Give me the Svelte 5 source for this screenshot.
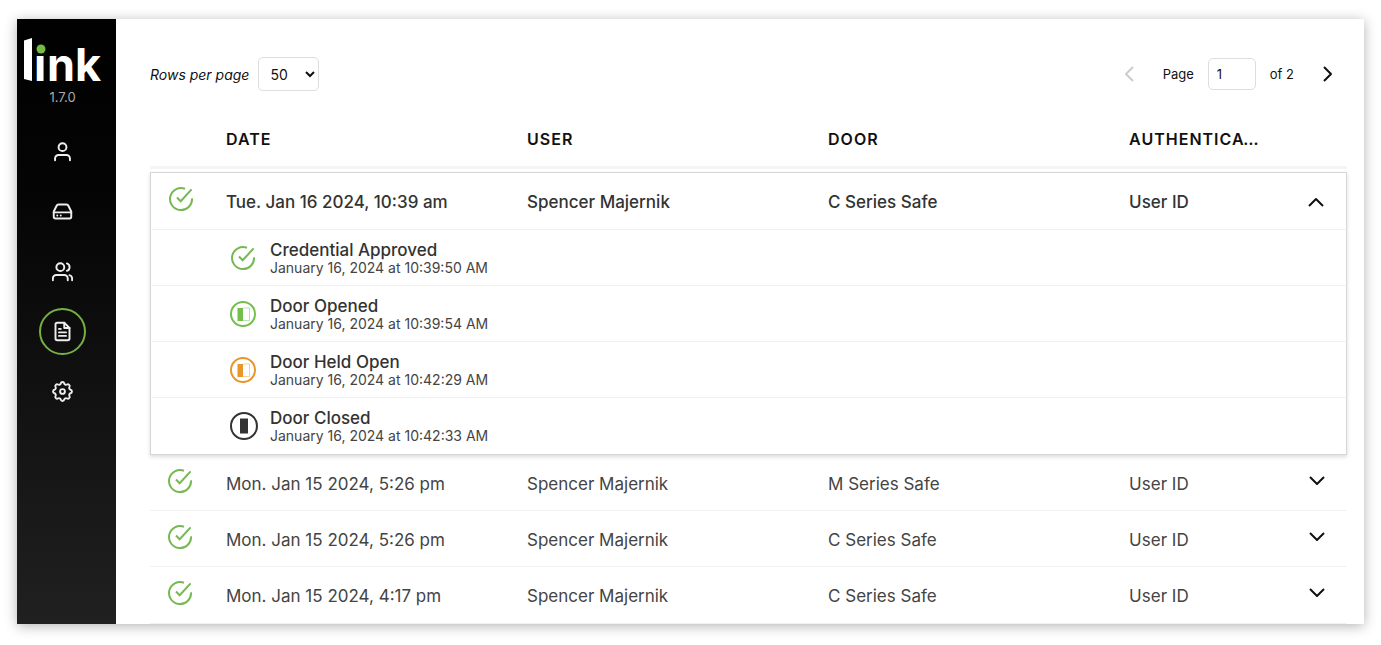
<script>
  let rowsPerPage = $state('50');
  let page = $state('1');

  const nav = [
    { label: 'Profile', icon: 'user' },
    { label: 'Devices', icon: 'drive' },
    { label: 'Users', icon: 'users' },
    { label: 'Reports', icon: 'file', active: true },
    { label: 'Settings', icon: 'gear' }
  ];

  const columns = ['Date', 'User', 'Door', 'Authentication'];

  let entries = $state([
    {
      date: 'Tue. Jan 16 2024, 10:39 am',
      user: 'Spencer Majernik',
      door: 'C Series Safe',
      auth: 'User ID',
      open: true,
      events: [
        { kind: 'approved', title: 'Credential Approved', time: 'January 16, 2024 at 10:39:50 AM' },
        { kind: 'opened', title: 'Door Opened', time: 'January 16, 2024 at 10:39:54 AM' },
        { kind: 'held', title: 'Door Held Open', time: 'January 16, 2024 at 10:42:29 AM' },
        { kind: 'closed', title: 'Door Closed', time: 'January 16, 2024 at 10:42:33 AM' }
      ]
    },
    { date: 'Mon. Jan 15 2024, 5:26 pm', user: 'Spencer Majernik', door: 'M Series Safe', auth: 'User ID', open: false, events: [] },
    { date: 'Mon. Jan 15 2024, 5:26 pm', user: 'Spencer Majernik', door: 'C Series Safe', auth: 'User ID', open: false, events: [] },
    { date: 'Mon. Jan 15 2024, 4:17 pm', user: 'Spencer Majernik', door: 'C Series Safe', auth: 'User ID', open: false, events: [] }
  ]);
</script>

{#snippet check()}
  <svg class="check" width="26" height="26" viewBox="0 0 26 26" aria-hidden="true">
    <path d="M24 12.4A11 11 0 1 1 17 2.8" />
    <path d="M9 11.5l3.7 3.8L23.6 3.4" />
  </svg>
{/snippet}

{#snippet navIcon(name)}
  <svg class="glyph" width="21" height="21" viewBox={name === 'gear' ? '2 2 20 20' : '0 0 24 24'} aria-hidden="true">
    {#if name === 'user'}
      <circle cx="12" cy="7" r="4.5" />
      <path d="M3.5 22v-2a4 4 0 0 1 4-4h9a4 4 0 0 1 4 4v2" />
    {:else if name === 'drive'}
      <path d="M22 13H2" />
      <path d="M5.45 5.11L2 12v6a2 2 0 0 0 2 2h16a2 2 0 0 0 2-2v-6l-3.45-6.89A2 2 0 0 0 16.76 4H7.24a2 2 0 0 0-1.79 1.11z" />
      <path d="M6 16.5h.01M10 16.5h.01" />
    {:else if name === 'users'}
      <circle cx="9.5" cy="7" r="4.5" />
      <path d="M1 22v-2a4 4 0 0 1 4-4h9a4 4 0 0 1 4 4v2" />
      <path d="M23 22v-2a4 4 0 0 0-3-3.87M17 2.8a4.4 4.4 0 0 1 0 8.4" />
    {:else if name === 'file'}
      <path d="M14 2H6a2 2 0 0 0-2 2v16a2 2 0 0 0 2 2h12a2 2 0 0 0 2-2V8z" />
      <path d="M14 2v6h6M16 13H8M16 17H8M10 9H8" />
    {:else}
      <path
        class="gear"
        d="M10.325 4.317c.426-1.756 2.924-1.756 3.35 0a1.724 1.724 0 002.573 1.066c1.543-.94 3.31.826 2.37 2.37a1.724 1.724 0 001.065 2.572c1.756.426 1.756 2.924 0 3.35a1.724 1.724 0 00-1.066 2.573c.94 1.543-.826 3.31-2.37 2.37a1.724 1.724 0 00-2.572 1.065c-.426 1.756-2.924 1.756-3.35 0a1.724 1.724 0 00-2.573-1.066c-1.543.94-3.31-.826-2.37-2.37a1.724 1.724 0 00-1.065-2.572c-1.756-.426-1.756-2.924 0-3.35a1.724 1.724 0 001.066-2.573c-.94-1.543.826-3.31 2.37-2.37.996.608 2.296.07 2.572-1.065z"
      />
      <circle class="gear" cx="12" cy="12" r="2.3" />
    {/if}
  </svg>
{/snippet}

<div class="app">
  <aside>
    <svg class="logo" width="79" height="44" viewBox="0 0 79 44" role="img" aria-label="link">
      <clipPath id="stem"><path d="M1 2.5L9 0V43L1 41z" /></clipPath>
      <g clip-path="url(#stem)"><text x="-3" y="44" font-size="62">l</text></g>
      <text x="11 24 52" y="43" font-size="45">ınk</text>
      <circle cx="18" cy="11" r="4.5" fill="#76b943" />
    </svg>
    <span class="version">1.7.0</span>
    <nav>
      {#each nav as item}
        <a href="#{item.icon}" class:active={item.active} aria-label={item.label}>{@render navIcon(item.icon)}</a>
      {/each}
    </nav>
  </aside>

  <main>
    <div class="toolbar">
      <label class="rows" for="rows">Rows per page</label>
      <select id="rows" bind:value={rowsPerPage}>
        <option>25</option>
        <option>50</option>
        <option>100</option>
      </select>
      <div class="pager">
        <button type="button" disabled aria-label="Previous page">
          <svg class="chevron" width="16" height="16" viewBox="0 0 16 16"><path d="M12 1L5 8l7 7" /></svg>
        </button>
        <label for="page">Page</label>
        <input id="page" type="text" bind:value={page} />
        <span>of 2</span>
        <button type="button" aria-label="Next page">
          <svg class="chevron" width="16" height="16" viewBox="0 0 16 16"><path d="M5 1l7 7-7 7" /></svg>
        </button>
      </div>
    </div>

    <table>
      <colgroup>
        <col class="c-status" />
        <col class="c-data" />
        <col class="c-data" />
        <col class="c-data" />
        <col />
        <col class="c-toggle" />
      </colgroup>
      <thead>
        <tr>
          <th></th>
          {#each columns as column}
            <th scope="col">{column}</th>
          {/each}
          <th></th>
        </tr>
      </thead>
      {#each entries as entry}
        <tbody class:open={entry.open}>
          <tr class="entry">
            <td class="status">{@render check()}</td>
            <td>{entry.date}</td>
            <td>{entry.user}</td>
            <td>{entry.door}</td>
            <td>{entry.auth}</td>
            <td class="toggle">
              <button type="button" aria-label="Toggle details" aria-expanded={entry.open} onclick={() => (entry.open = !entry.open)}>
                <svg class="chevron" width="16" height="16" viewBox="0 0 16 16">
                  <path d={entry.open ? 'M1 15l7-7 7 7' : 'M1 4l7 7 7-7'} />
                </svg>
              </button>
            </td>
          </tr>
          {#if entry.open}
            {#each entry.events as event}
              <tr class="event">
                <td colspan="6">
                  <div class="detail">
                    <span class="badge">
                      {#if event.kind === 'approved'}
                        {@render check()}
                      {:else if event.kind === 'closed'}
                        <svg width="28" height="28" viewBox="0 0 28 28" fill="none" aria-hidden="true">
                          <circle cx="14" cy="14" r="13" stroke="#333" stroke-width="2" />
                          <path d="M10 6.5h8v15h-8z" fill="#333" />
                        </svg>
                      {:else}
                        <svg class={event.kind} width="26" height="26" viewBox="0 0 26 26" fill="none" aria-hidden="true">
                          <circle cx="13" cy="13" r="12" stroke="currentColor" stroke-width="2" />
                          <path d="M7.5 7H13v13H7.5z" fill="currentColor" />
                          <path d="M13 7h6.5v12.5H13" stroke="currentColor" stroke-opacity=".45" />
                        </svg>
                      {/if}
                    </span>
                    <div>
                      <div class="title">{event.title}</div>
                      <div class="time">{event.time}</div>
                    </div>
                  </div>
                </td>
              </tr>
            {/each}
          {/if}
        </tbody>
      {/each}
    </table>
  </main>
</div>

<style>
  :global(body) {
    background: #fff;
  }

  * {
    box-sizing: border-box;
  }

  .app {
    display: flex;
    margin: 19px 17px 21px;
    background: #fff;
    box-shadow: 0 2px 12px rgba(0, 0, 0, 0.3);
    font-family: Inter, sans-serif;
    color: #111;
  }

  aside {
    flex: none;
    display: flex;
    flex-direction: column;
    align-items: center;
    width: 99px;
    padding: 19px 8px 0 0;
    background: linear-gradient(#000, #050505 30%, #202020);
  }

  .logo {
    overflow: visible;
  }

  .logo text {
    fill: #fff;
    font-weight: 700;
  }

  .version {
    margin-top: 6px;
    font-size: 13px;
    line-height: 18px;
    color: #aaa;
  }

  nav {
    display: flex;
    flex-direction: column;
    gap: 13px;
    margin-top: 22px;
  }

  nav a {
    display: flex;
    align-items: center;
    justify-content: center;
    width: 47px;
    height: 47px;
    border: 2px solid transparent;
    border-radius: 50%;
  }

  nav a.active {
    border-color: #76b043;
  }

  .glyph {
    fill: none;
    stroke: #eee;
    stroke-width: 2.2;
    stroke-linecap: round;
    stroke-linejoin: round;
  }

  .gear {
    stroke-width: 1.8;
  }

  main {
    flex: 1;
    min-width: 0;
    padding: 38px 17px 0 34px;
  }

  .toolbar {
    display: flex;
    align-items: center;
    height: 34px;
    font-size: 13px;
  }

  .rows {
    margin-right: 9px;
    font-size: 14px;
    font-style: italic;
  }

  select,
  input {
    border: 1px solid #ddd;
    border-radius: 5px;
    background: #fff;
    color: #111;
    font: inherit;
  }

  select {
    width: 61px;
    height: 34px;
    padding-left: 7px;
    font-size: 14px;
  }

  input {
    width: 48px;
    height: 32px;
    margin: 0 14px;
    padding: 0 8px;
  }

  .pager {
    display: flex;
    align-items: center;
    margin-left: auto;
    padding-right: 12px;
  }

  .pager label {
    margin-left: 26px;
  }

  .pager span {
    margin-right: 25px;
  }

  button {
    display: inline-flex;
    padding: 0;
    border: 0;
    background: none;
    color: #111;
    cursor: pointer;
  }

  button:disabled {
    color: #ccc;
    cursor: default;
  }

  .chevron {
    fill: none;
    stroke: currentColor;
    stroke-width: 2;
    stroke-linejoin: round;
  }

  table {
    width: 100%;
    margin-top: 19px;
    table-layout: fixed;
    border-collapse: separate;
    border-spacing: 0;
    font-size: 16px;
  }

  .c-status {
    width: 76px;
  }

  .c-data {
    width: 25.15%;
  }

  .c-toggle {
    width: 82px;
  }

  th {
    height: 59px;
    padding: 2px 0 0;
    border-bottom: 3px solid #f5f5f6;
    overflow: hidden;
    font-weight: 600;
    letter-spacing: 1px;
    text-align: left;
    text-overflow: ellipsis;
    text-transform: uppercase;
    white-space: nowrap;
  }

  thead::after {
    content: '';
    display: block;
    height: 3px;
  }

  td {
    height: 56px;
    padding: 0;
    border-bottom: 1px solid #f1f1f1;
    color: #444;
  }

  .entry td {
    padding-top: 2px;
    font-size: 17px;
  }

  .entry .status {
    padding: 0 0 4px 17px;
    line-height: 0;
  }

  .entry .toggle {
    padding: 0 22px 4px 0;
    text-align: right;
    line-height: 0;
  }

  .open {
    box-shadow: 0 2px 4px rgba(0, 0, 0, 0.14);
  }

  .open .entry td {
    height: 58px;
    border-top: 1px solid #d6d6d6;
    color: #333;
    font-weight: 500;
  }

  .open td:first-child {
    border-left: 1px solid #d6d6d6;
  }

  .open td:last-child {
    border-right: 1px solid #d6d6d6;
  }

  .open tr:last-child td {
    height: 57px;
    border-bottom-color: #d6d6d6;
  }

  tbody:last-child td {
    height: 57px;
  }

  .check {
    fill: none;
    stroke: #76b852;
    stroke-width: 2;
  }

  .detail {
    display: flex;
    align-items: center;
    gap: 11px;
    padding-left: 79px;
  }

  .badge {
    display: flex;
    width: 29px;
  }

  .opened {
    color: #72bf4b;
  }

  .held {
    color: #e8962a;
  }

  .title {
    font-size: 17px;
    line-height: 20px;
    font-weight: 500;
    color: #333;
  }

  .time {
    font-size: 14px;
    line-height: 16px;
    color: #444;
  }
</style>
